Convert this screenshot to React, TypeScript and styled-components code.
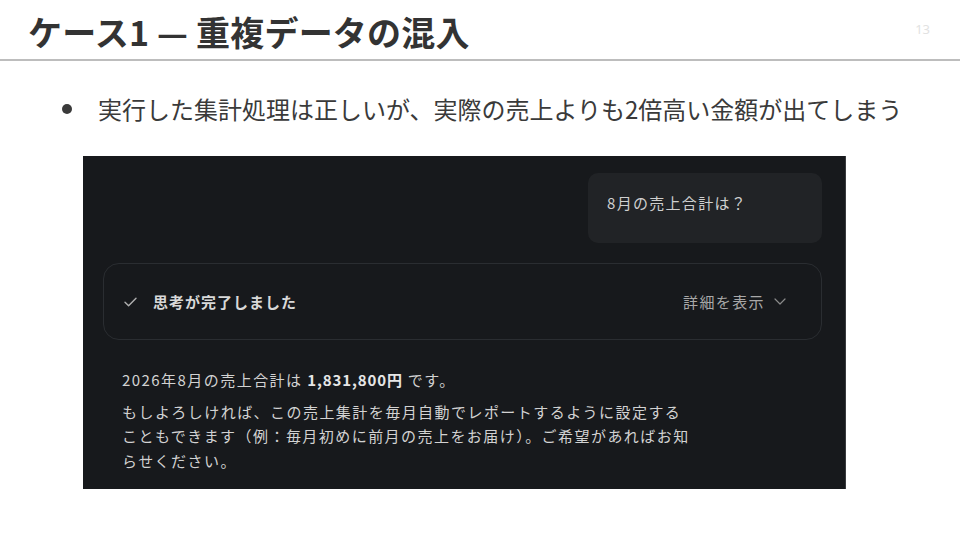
import styled, { createGlobalStyle } from "styled-components";

const GlobalStyle = createGlobalStyle`
  html, body {
    margin: 0;
    padding: 0;
    background: #ffffff;
  }
  body {
    font-family: "Noto Sans CJK JP", "Noto Sans", sans-serif;
  }
`;

const Slide = styled.div`
  width: 960px;
  height: 540px;
  overflow: hidden;
  display: flex;
  flex-direction: column;
`;

const Header = styled.header`
  height: 61px;
  border-bottom: 2px solid #bdbdbd;
  display: flex;
  align-items: center;
  justify-content: space-between;
  padding: 0 28px 0 28px;
  box-sizing: border-box;
`;

const Title = styled.h1`
  margin: 0;
  padding-top: 3px;
  font-size: 34px;
  font-weight: 700;
  color: #333333;
  letter-spacing: 0.2px;
`;

const PageNo = styled.span`
  font-family: "Noto Sans", sans-serif;
  font-size: 13px;
  color: #e2e2e2;
  margin-right: 2px;
  margin-bottom: 2px;
`;

const Bullets = styled.ul`
  list-style: none;
  margin: 0;
  padding: 31px 0 0 58px;
`;

const Bullet = styled.li`
  display: flex;
  align-items: center;
  gap: 26px;
  font-size: 24px;
  color: #3a3a3a;
  line-height: 34px;

  &::before {
    content: "";
    width: 10px;
    height: 10px;
    border-radius: 50%;
    background: #3a3a3a;
    margin-left: 4px;
  }
`;

const Shot = styled.div`
  margin: 30px 0 0 83px;
  width: 763px;
  height: 333px;
  background: #17191c;
  border-right: 1px solid #3a3c3f;
  box-sizing: border-box;
  padding: 17px 23px 0 20px;
  display: flex;
  flex-direction: column;
  color: #d6d6d6;
  font-family: "Noto Sans CJK JP", "Noto Sans", sans-serif;
`;

const UserBubble = styled.div`
  align-self: flex-end;
  width: 234px;
  height: 70px;
  box-sizing: border-box;
  background: #212326;
  border-radius: 10px;
  padding: 19px 19px 0;
  font-size: 15px;
  letter-spacing: 1.3px;
  line-height: 22px;
  color: #cfcfcf;
`;

const ThinkCard = styled.div`
  margin-top: 20px;
  height: 77px;
  box-sizing: border-box;
  border: 1px solid #2a2d31;
  border-radius: 16px;
  display: flex;
  align-items: center;
  justify-content: space-between;
  padding: 0 35px 0 20px;
`;

const ThinkLabel = styled.div`
  display: flex;
  align-items: center;
  gap: 16px;
  font-size: 15px;
  font-weight: 700;
  letter-spacing: 1px;
  color: #d8d8d8;
`;

const Details = styled.div`
  display: flex;
  align-items: center;
  gap: 9px;
  font-size: 15px;
  letter-spacing: 1.4px;
  color: #a8a8a8;
`;

const Answer = styled.div`
  padding: 28px 0 0 19px;
  font-size: 15px;
  letter-spacing: 1.45px;
  color: #d2d2d2;
`;

const Para = styled.p<{ $gap?: number }>`
  margin: 0 0 ${(p) => p.$gap ?? 0}px;
  line-height: 24.5px;
  white-space: nowrap;

  strong {
    font-weight: 700;
    color: #e6e6e6;
    letter-spacing: 0.9px;
  }
`;

const Check = () => (
  <svg width="13" height="10" viewBox="0 0 13 10" fill="none">
    <path d="M1 5.2 L4.6 8.8 L12 1.2" stroke="#b0b0b0" strokeWidth="1.4" strokeLinecap="round" strokeLinejoin="round" />
  </svg>
);

const Chevron = () => (
  <svg width="12" height="7" viewBox="0 0 12 7" fill="none">
    <path d="M1 1 L6 6 L11 1" stroke="#8a8a8a" strokeWidth="1.2" strokeLinecap="round" strokeLinejoin="round" />
  </svg>
);

export default function App() {
  return (
    <Slide>
      <GlobalStyle />
      <Header>
        <Title>ケース1 — 重複データの混入</Title>
        <PageNo>13</PageNo>
      </Header>
      <Bullets>
        <Bullet>実行した集計処理は正しいが、実際の売上よりも2倍高い金額が出てしまう</Bullet>
      </Bullets>
      <Shot>
        <UserBubble>8月の売上合計は？</UserBubble>
        <ThinkCard>
          <ThinkLabel>
            <Check />
            思考が完了しました
          </ThinkLabel>
          <Details>
            詳細を表示
            <Chevron />
          </Details>
        </ThinkCard>
        <Answer>
          <Para $gap={7}>
            2026年8月の売上合計は <strong>1,831,800円</strong> です。
          </Para>
          <Para>
            もしよろしければ、この売上集計を毎月自動でレポートするように設定する
            <br />
            こともできます（例：毎月初めに前月の売上をお届け）。ご希望があればお知
            <br />
            らせください。
          </Para>
        </Answer>
      </Shot>
    </Slide>
  );
}
